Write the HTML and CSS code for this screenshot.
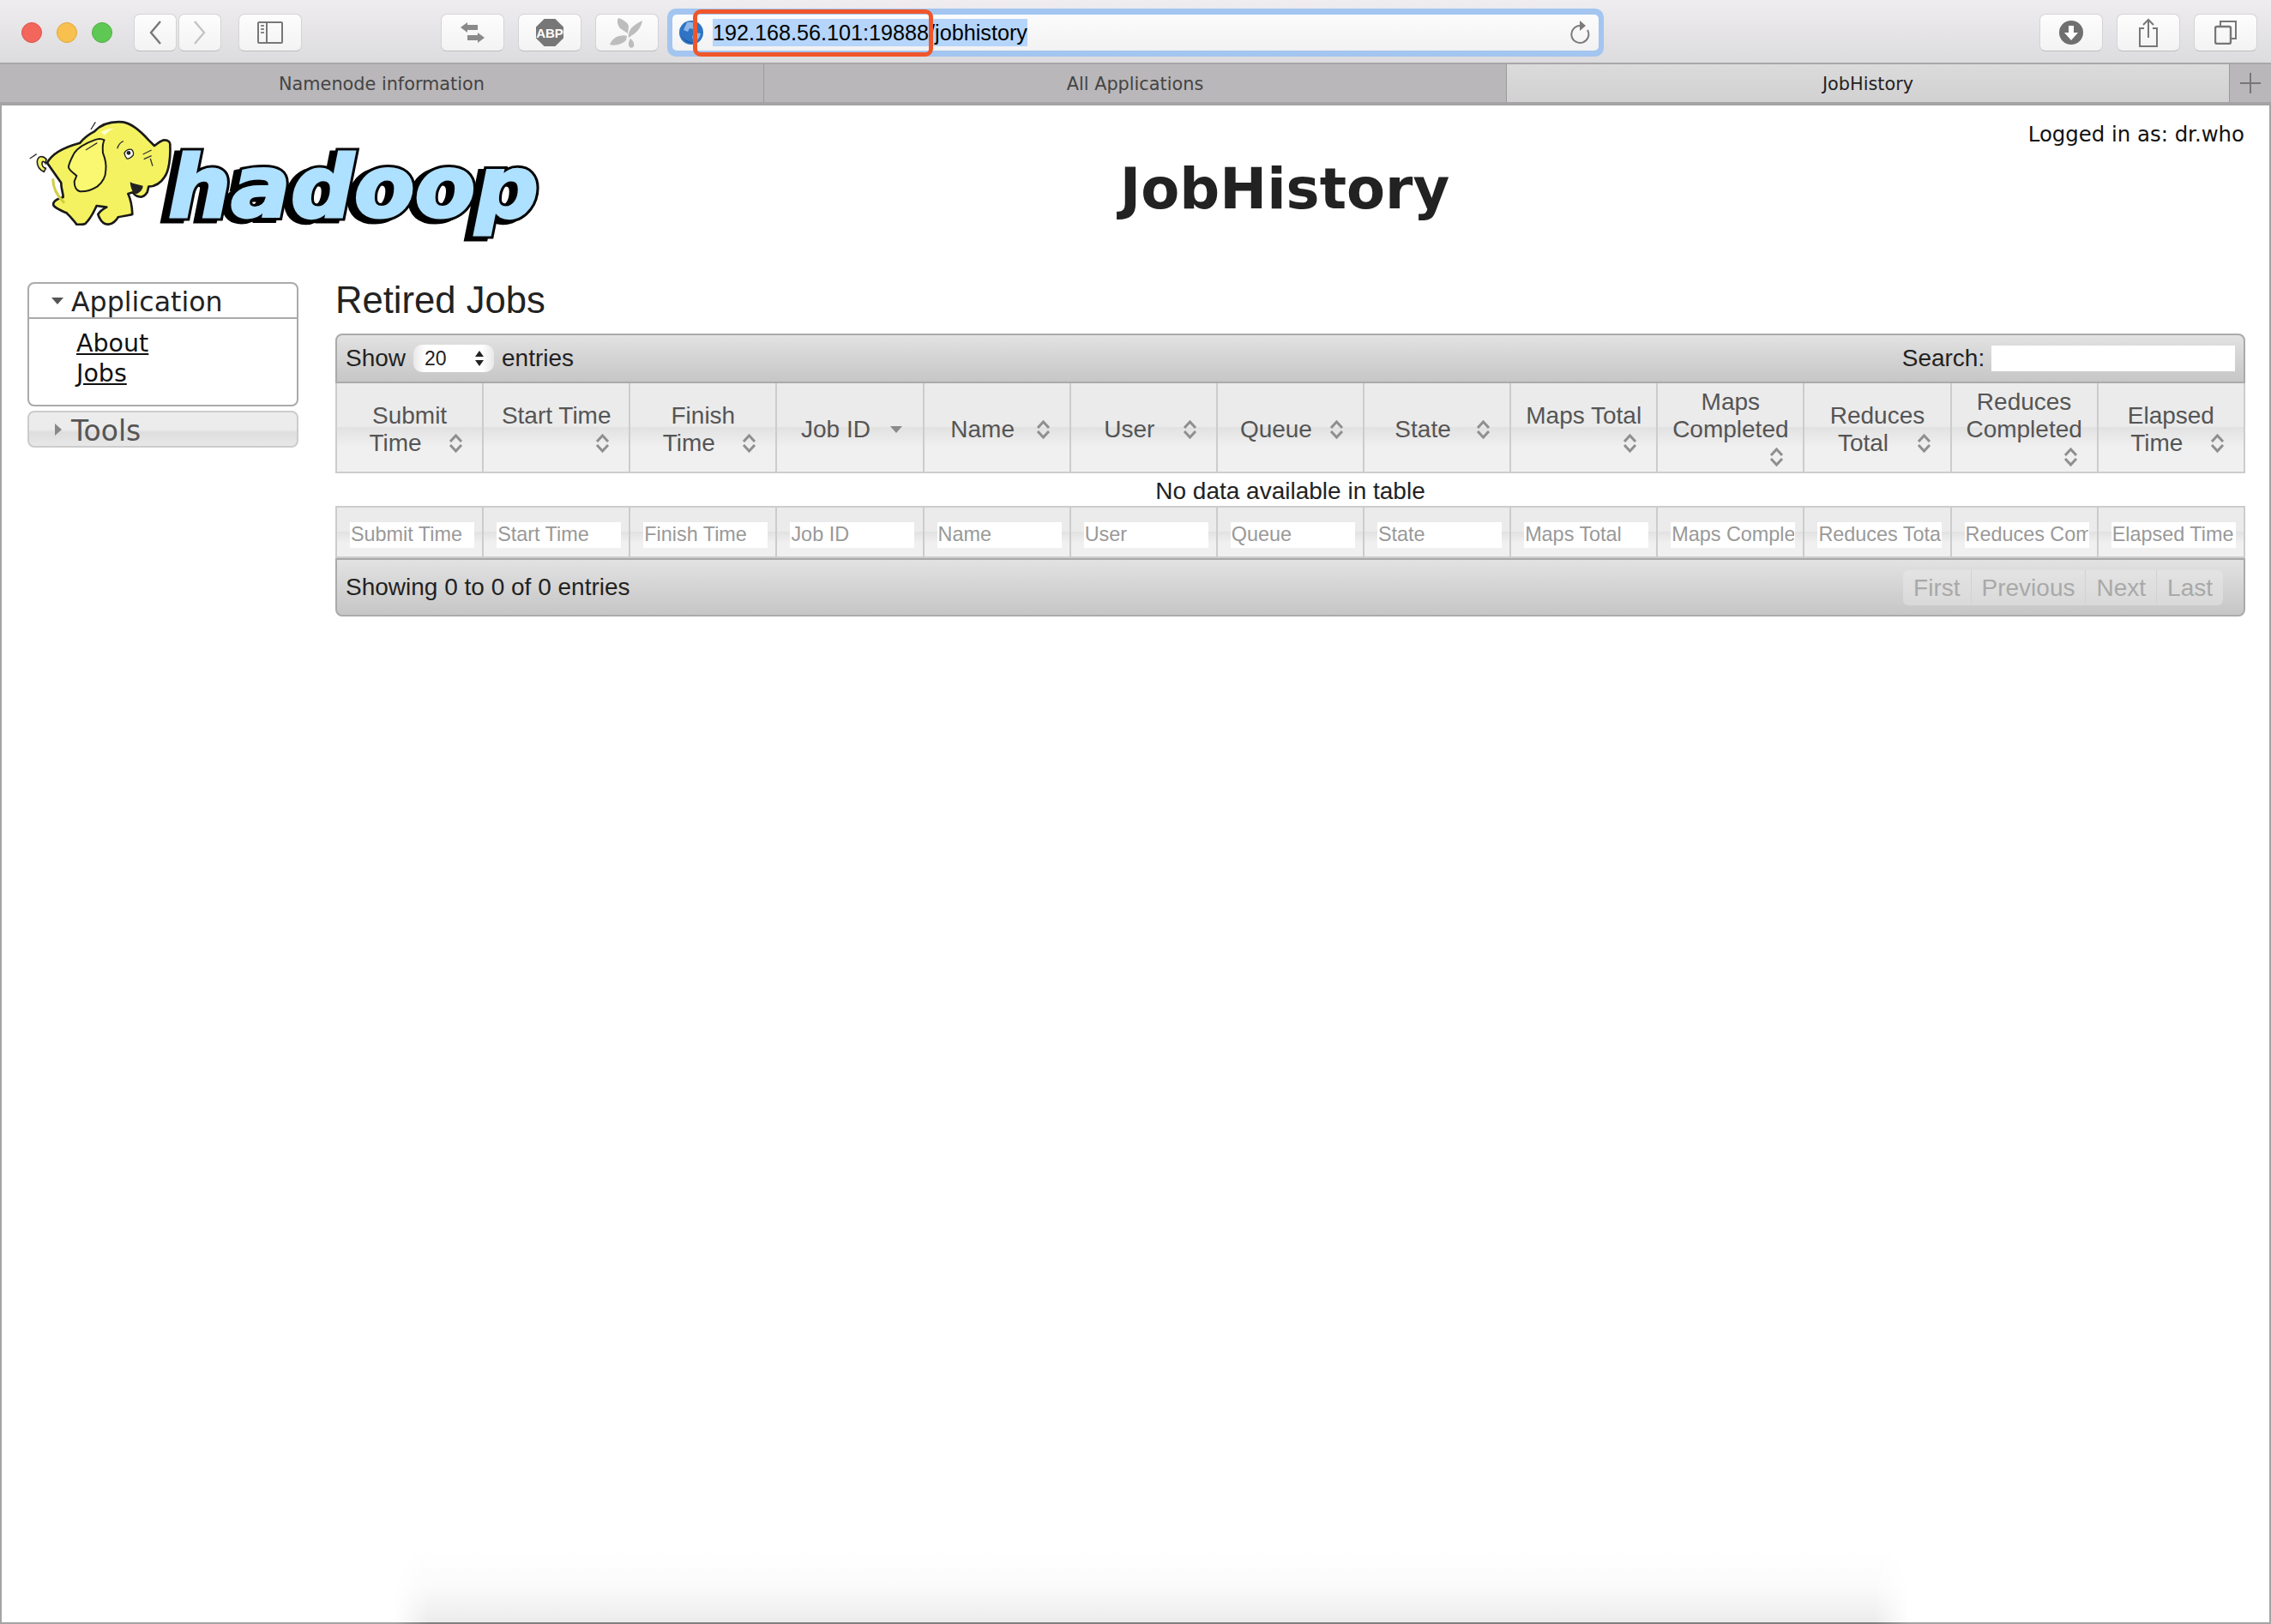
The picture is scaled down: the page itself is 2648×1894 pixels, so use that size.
FILE: index.html
```html
<!DOCTYPE html>
<html lang="en">
  <head>
    <meta charset="UTF-8" />
    <title>JobHistory</title>
    <link rel="stylesheet" href="styles.css">
  </head>
  <body>
    <header class="toolbar">
      <span class="light red"></span>
      <span class="light yellow"></span>
      <span class="light green"></span>
      <div class="btn nav-back">
        <svg width="16" height="30" viewBox="0 0 16 30"><path d="M14 2 3 15l11 13" fill="none" stroke="#777" stroke-width="2.4"/></svg>
      </div>
      <div class="btn nav-fwd">
        <svg width="16" height="30" viewBox="0 0 16 30"><path d="M2 2l11 13L2 28" fill="none" stroke="#c4c4c4" stroke-width="2.4"/></svg>
      </div>
      <div class="btn wide sidebar-btn">
        <svg width="30" height="26" viewBox="0 0 30 26"><rect x="1" y="1" width="28" height="24" rx="1" fill="none" stroke="#777" stroke-width="2"/><path d="M11 1v24" stroke="#777" stroke-width="2"/><path d="M4 5h4M4 9h4M4 13h4" stroke="#888" stroke-width="2"/></svg>
      </div>
      <div class="btn wide ext-first">
        <svg width="28" height="24" viewBox="0 0 28 24"><path d="M0 6l8-6v3h12v6H8v3zM28 18l-8 6v-3H8v-6h12v-3z" fill="#8a8a8a"/></svg>
      </div>
      <div class="btn wide ext">
        <span class="abp">ABP</span>
      </div>
      <div class="btn wide ext">
        <svg width="40" height="36" viewBox="0 0 40 36"><path d="M10 1c6 2 12 6 12 10l-1 8-9-6c-3-4-4-8-2-12zM38 4c-1 7-6 14-12 17l-4 3c-1-4 1-10 5-13 3-3 7-5 11-7zM0 32c2-5 6-9 11-10 4-1 7-1 9 0l-1 5c-4 4-12 7-19 5zM24 25c3 2 5 5 4 9-1 2-4 2-5 1-2-3-1-7 1-10z" fill="#bdbdbd"/></svg>
      </div>
      <div class="url-ring">
        <div class="url-field">
          <svg class="globe" width="28" height="28" viewBox="0 0 28 28"><circle cx="14" cy="14" r="14" fill="#2f74c4"/><path d="M9 2c5-1 10 0 12 4l-4 4-5-1-2 4-5-2zM18 14l7 1c-1 5-4 9-8 10l-2-6z" fill="#8db8e6"/><path d="M2 17c3 6 9 10 15 9C10 25 5 22 2 17z" fill="#15407e"/></svg>
          <span class="url-box"><span class="url-text">192.168.56.101:19888/jobhistory</span></span>
          <svg class="reload" width="24" height="30" viewBox="0 0 24 30"><path d="M12 7A10 10 0 1 0 21 12" fill="none" stroke="#7b7b7b" stroke-width="2"/><path d="M12 1l7 6-7 6z" fill="#7b7b7b"/></svg>
        </div>
      </div>
      <div class="btn tool download">
        <svg width="28" height="28" viewBox="0 0 28 28"><circle cx="14" cy="14" r="14" fill="#6f6f6f"/><path d="M11 6h6v8h5l-8 9-8-9h5z" fill="#fff"/></svg>
      </div>
      <div class="btn tool">
        <svg width="24" height="34" viewBox="0 0 24 34"><path d="M7 12H2v21h20V12h-5" fill="none" stroke="#777" stroke-width="2"/><path d="M12 23V2M6 8l6-6 6 6" fill="none" stroke="#777" stroke-width="2"/></svg>
      </div>
      <div class="btn tool">
        <svg width="26" height="28" viewBox="0 0 26 28"><rect x="1" y="7" width="18" height="20" rx="2" fill="none" stroke="#777" stroke-width="2.4"/><path d="M7 6V1h18v20h-5" fill="none" stroke="#777" stroke-width="2"/></svg>
      </div>
    </header>
    <div class="url-mark"></div>

    <nav class="tabs">
      <div class="tab first">Namenode information</div>
      <div class="tab second">All Applications</div>
      <div class="tab active">JobHistory</div>
      <div class="tab-add">
        <svg width="26" height="26" viewBox="0 0 26 26"><path d="M13 1v24M1 13h24" stroke="#777" stroke-width="2"/></svg>
      </div>
    </nav>

    <main class="page">
      <div class="banner">
        <svg class="logo" width="600" height="145" viewBox="34 140 600 145">
          <defs>
            <text id="word" x="196" y="253" textLength="432" lengthAdjust="spacingAndGlyphs">hadoop</text>
          </defs>
          <use href="#word" class="word-back" x="-7" y="3"/>
          <use href="#word" class="word-back"/>
          <use href="#word" class="word-front"/>
          <g transform="translate(30 135) scale(0.3333)">
            <path d="M72 152C58 136 42 142 40 160c-1 16 10 32 24 36l6-12c-8-2-14-10-13-20 2-6 8-4 12 2z" fill="#f4f260" stroke="#222" stroke-width="5"/>
            <path d="M75 165c12-24 40-50 115-70 14-18 34-32 50-40 24-26 62-36 100-33 30 4 62 32 90 63l20 20c12-8 24-20 35-20 14 0 22 8 20 20 2 42-4 90-20 110-14 22-36 32-55 33l-5 20c-8 12-18 18-28 15-12-2-18-8-22-15l-17 5c10 20 14 48 15 72-14 4-34 6-50 10-6 12-22 26-35 25-12 0-26-8-35-35 6-10 16-18 30-25l-35-5c-8 18-22 46-40 63-10 4-24 2-30 2-8-12-24-28-35-40-14-6-32-12-45-25-4-8-2-20 33-30 0-16-8-32-7-50z" fill="#f4f260" stroke="#1a1a1a" stroke-width="8" stroke-linejoin="round"/>
            <path d="M240 85c14-6 28-4 35 0-8 14-6 30-5 45 8 20 12 44 10 60 0 22-12 44-30 58-16 10-36 18-60 17-14-4-20-16-20-35l8-20c-10-10-28-20-28-30 0-14 12-34 20-50 14-20 40-34 70-45z" fill="#f9f870" stroke="#1a1a1a" stroke-width="6" stroke-linejoin="round"/>
            <path d="M365 232c12 6 30 10 45 13 0 12-10 24-22 28-10 2-20-12-23-41z" fill="#222"/>
            <path d="M345 130c6-10 16-14 25-12 6 4 8 14 6 20-8 8-16 14-22 12-4-4-8-12-9-20z" fill="#fff" stroke="#222" stroke-width="4"/>
            <circle cx="360" cy="130" r="7" fill="#222"/>
            <path d="M320 115c4-12 10-22 22-26M410 135l30-15M413 152l27-12M436 150l8 26M228 48l16-26M14 150l24-16M210 120l40-25" fill="none" stroke="#333" stroke-width="4"/>
            <path d="M262 58c14-10 30-14 46-14-16 8-24 16-32 24z" fill="#fffec8"/>
            <path d="M95 220c0 30 14 60 40 85" fill="none" stroke="#d0ce40" stroke-width="9"/>
          </g>
        </svg>
        <h1 class="title">JobHistory</h1>
        <div class="user">Logged in as: dr.who</div>
      </div>

      <div class="columns">
        <aside class="side">
          <div class="acc open">
            <div class="acc-head">
              <svg class="acc-arrow" width="14" height="8" viewBox="0 0 14 8"><path d="M0 0h14L7 8z" fill="#555"/></svg>
              Application
            </div>
            <div class="acc-body">
              <a href="#">About</a>
              <a href="#">Jobs</a>
            </div>
          </div>
          <div class="acc closed">
            <div class="acc-head">
              <svg class="acc-arrow" width="8" height="14" viewBox="0 0 8 14"><path d="M0 0l8 7-8 7z" fill="#888"/></svg>
              Tools
            </div>
          </div>
        </aside>

        <section class="content">
          <h2 class="heading">Retired Jobs</h2>
          <div class="bar top">
            <div class="length">
              Show
              <span class="select">20
                <svg width="10" height="18" viewBox="0 0 10 18"><path d="M5 0l5 7H0zM5 18l5-7H0z" fill="#222"/></svg>
              </span>
              entries
            </div>
            <label class="search">Search: <input type="text"></label>
          </div>
          <table class="jobs">
            <thead>
              <tr>
                <th>Submit Time<svg class="sort"><use href="#both"/></svg></th>
                <th>Start Time<svg class="sort"><use href="#both"/></svg></th>
                <th>Finish Time<svg class="sort"><use href="#both"/></svg></th>
                <th>Job ID<svg class="sort"><use href="#desc"/></svg></th>
                <th>Name<svg class="sort"><use href="#both"/></svg></th>
                <th>User<svg class="sort"><use href="#both"/></svg></th>
                <th>Queue<svg class="sort"><use href="#both"/></svg></th>
                <th>State<svg class="sort"><use href="#both"/></svg></th>
                <th>Maps Total<svg class="sort"><use href="#both"/></svg></th>
                <th>Maps Completed<svg class="sort"><use href="#both"/></svg></th>
                <th>Reduces Total<svg class="sort"><use href="#both"/></svg></th>
                <th>Reduces Completed<svg class="sort"><use href="#both"/></svg></th>
                <th>Elapsed Time<svg class="sort"><use href="#both"/></svg></th>
              </tr>
            </thead>
            <tbody>
              <tr><td colspan="13" class="empty">No data available in table</td></tr>
            </tbody>
            <tfoot>
              <tr>
                <th><input placeholder="Submit Time"></th>
                <th><input placeholder="Start Time"></th>
                <th><input placeholder="Finish Time"></th>
                <th><input placeholder="Job ID"></th>
                <th><input placeholder="Name"></th>
                <th><input placeholder="User"></th>
                <th><input placeholder="Queue"></th>
                <th><input placeholder="State"></th>
                <th><input placeholder="Maps Total"></th>
                <th><input placeholder="Maps Completed"></th>
                <th><input placeholder="Reduces Total"></th>
                <th><input placeholder="Reduces Completed"></th>
                <th><input placeholder="Elapsed Time"></th>
              </tr>
            </tfoot>
          </table>
          <div class="bar bottom">
            <div>Showing 0 to 0 of 0 entries</div>
            <div class="pager">
              <span>First</span><span>Previous</span><span>Next</span><span>Last</span>
            </div>
          </div>
        </section>
      </div>
      <div class="window-shadow"></div>
    </main>

    <svg class="defs" width="0" height="0">
      <symbol id="both" viewBox="0 0 33 32" overflow="visible">
        <path d="M11 14l6.5-7 6.5 7M11 18l6.5 7 6.5-7" fill="none" stroke="#8f8f8f" stroke-width="3"/>
      </symbol>
      <symbol id="desc" viewBox="0 0 33 32" overflow="visible">
        <path d="M10 12h14l-7 8z" fill="#8a8a8a"/>
      </symbol>
    </svg>
  </body>
</html>
```

FILE: styles.css
```css
* {
  box-sizing: border-box;
}
html,
body {
  margin: 0;
  height: 1894px;
  overflow: hidden;
}
body {
  position: relative;
  background: #fff;
  color: #222;
  font-family: "Liberation Sans", sans-serif;
}

/* browser chrome */
.toolbar {
  display: flex;
  align-items: center;
  height: 75px;
  padding: 3px 16px 0 25px;
  background: linear-gradient(#efedef, #dcdbdd);
  border-bottom: 2px solid #a8a6a8;
}
.light {
  width: 24px;
  height: 24px;
  border-radius: 50%;
  margin-right: 17px;
}
.light.red {
  background: #f2665c;
  border: 1px solid #e0524a;
}
.light.yellow {
  background: #f8c04e;
  border: 1px solid #e0a73c;
}
.light.green {
  background: #5fc855;
  border: 1px solid #50b046;
}
.btn {
  display: flex;
  align-items: center;
  justify-content: center;
  flex: none;
  width: 50px;
  height: 44px;
  border-radius: 7px;
  background: linear-gradient(#fdfdfd, #f3f3f3);
  border: 1px solid #d4d3d5;
  border-bottom-color: #bdbcbe;
}
.nav-back {
  margin-left: 8px;
}
.nav-fwd {
  margin-left: 2px;
}
.btn.wide {
  width: 74px;
}
.sidebar-btn {
  margin-left: 20px;
}
.ext-first {
  margin-left: 162px;
}
.ext {
  margin-left: 16px;
}
.abp {
  width: 32px;
  height: 32px;
  display: flex;
  align-items: center;
  justify-content: center;
  background: #777;
  color: #fff;
  font-size: 15px;
  font-weight: bold;
  clip-path: polygon(30% 0, 70% 0, 100% 30%, 100% 70%, 70% 100%, 30% 100%, 0 70%, 0 30%);
}
.url-ring {
  flex: none;
  width: 1092px;
  height: 56px;
  margin: 0 508px 0 10px;
  padding: 7px 6px;
  border-radius: 10px;
  background: #a3c5f0;
}
.url-field {
  display: flex;
  align-items: center;
  height: 42px;
  padding: 0 10px 0 8px;
  border-radius: 5px;
  background: linear-gradient(#fcfcfc, #f2f2f2);
}
.globe {
  flex: none;
}
.url-box {
  flex: 1;
  margin-left: 11px;
}
.url-text {
  display: inline-block;
  line-height: 32px;
  font-size: 25.2px;
  color: #000;
  background: #b5d5fb;
}
.reload {
  flex: none;
}
.btn.tool {
  width: 74px;
  margin-right: 16px;
}
.btn.tool:last-child {
  margin-right: 0;
}
.url-mark {
  position: absolute;
  left: 808px;
  top: 11px;
  width: 280px;
  height: 55px;
  border: 5px solid #f0562a;
  border-radius: 9px;
}
.tabs {
  display: flex;
  height: 48px;
  background: #b9b7b9;
  border-bottom: 4px solid #a5a3a5;
  font-family: "DejaVu Sans", sans-serif;
  font-size: 20.8px;
  color: #444;
}
.tab {
  display: flex;
  align-items: center;
  justify-content: center;
  padding-top: 2px;
  border-right: 1px solid #9c9a9c;
}
.tab.first {
  width: 891px;
}
.tab.second {
  width: 866px;
}
.tab.active {
  width: 843px;
  color: #222;
  background: linear-gradient(#dcdbdc, #d2d1d2);
}
.tab-add {
  flex: 1;
  display: flex;
  align-items: center;
  justify-content: center;
}

/* page */
.page {
  position: relative;
  height: 1771px;
  border-left: 2px solid #a5a3a5;
  border-right: 2px solid #a5a3a5;
  border-bottom: 2px solid #a5a3a5;
}
.window-shadow {
  position: absolute;
  left: 458px;
  right: 420px;
  bottom: -2px;
  height: 87px;
  border-bottom: 2px solid #808080;
  background: linear-gradient(#fff, #fbfbfb 50%, #ececec);
  -webkit-mask-image: linear-gradient(90deg, transparent, #000 40px, #000 calc(100% - 40px), transparent);
  mask-image: linear-gradient(90deg, transparent, #000 40px, #000 calc(100% - 40px), transparent);
}
.banner {
  display: grid;
  grid-template-columns: 380px 1fr 32px;
  height: 204px;
}
.logo {
  grid-column: 1;
  grid-row: 1;
  margin: 17px 0 0 32px;
}
#word {
  font-family: "DejaVu Sans", sans-serif;
  font-weight: bold;
  font-style: italic;
  font-size: 100px;
}
.word-back {
  fill: #000;
  stroke: #000;
  stroke-width: 9px;
  stroke-linejoin: miter;
}
.word-front {
  fill: #aee0ff;
  stroke: #aee0ff;
  stroke-width: 3px;
}
.title {
  grid-column: 2;
  grid-row: 1;
  margin: 57px 0 0;
  text-align: center;
  font-family: "DejaVu Sans", sans-serif;
  font-size: 65.6px;
  font-weight: bold;
  line-height: 80px;
}
.user {
  grid-column: 2 / 4;
  grid-row: 1;
  justify-self: end;
  margin: 18px 29px 0 0;
  font-family: "DejaVu Sans", sans-serif;
  font-size: 24.4px;
  line-height: 32px;
  color: #111;
}
.columns {
  display: flex;
}
.side {
  width: 316px;
  margin-left: 30px;
  margin-top: 2px;
  font-family: "DejaVu Sans", sans-serif;
}
.acc {
  border: 2px solid #aaa;
  border-radius: 8px;
  font-size: 31.6px;
}
.acc-head {
  display: flex;
  align-items: center;
  height: 41px;
  padding: 2px 0 0 49px;
  position: relative;
  color: #222;
}
.acc-arrow {
  position: absolute;
  left: 26px;
  top: 16px;
}
.open .acc-head {
  border-bottom: 2px solid #aaa;
}
.acc-body {
  height: 100px;
  padding: 11px 0 0 55px;
  font-size: 28.5px;
  line-height: 35px;
}
.acc-body a {
  display: block;
  color: #111;
}
.closed {
  height: 43px;
  margin-top: 5px;
  border-color: #ccc;
  background: linear-gradient(#ececec 50%, #dedede 60%, #e8e8e8);
  font-size: 33px;
}
.closed .acc-head {
  color: #555;
}
.closed .acc-arrow {
  left: 30px;
  top: 13px;
}
.content {
  width: 2227px;
  margin-left: 43px;
}
.heading {
  margin: 0;
  height: 62px;
  font-size: 43.6px;
  font-weight: normal;
  line-height: 46px;
  color: #222;
}
.bar {
  display: flex;
  align-items: center;
  justify-content: space-between;
  font-size: 28px;
  color: #222;
  border: 2px solid #aaa;
  background: linear-gradient(#e2e2e2, #c6c6c6);
}
.bar.top {
  height: 58px;
  padding: 0 10px;
  border-radius: 8px 8px 0 0;
}
.bar.bottom {
  height: 68px;
  padding: 0 24px 0 10px;
  border-radius: 0 0 8px 8px;
}
.length {
  display: flex;
  align-items: center;
}
.select {
  display: flex;
  align-items: center;
  justify-content: space-between;
  width: 94px;
  height: 32px;
  margin: 0 9px;
  padding: 0 12px 0 13px;
  border-radius: 10px;
  background: linear-gradient(90deg, #e8e8e8, #fff 15%, #fff 85%, #e8e8e8);
  font-size: 23px;
}
.search {
  display: flex;
  align-items: center;
  white-space: pre;
}
.search input {
  width: 284px;
  height: 30px;
  border: 0;
  background: #fff;
}
.jobs {
  width: 100%;
  table-layout: fixed;
  border-collapse: collapse;
}
.jobs thead th {
  height: 104px;
  padding: 5px 15px 0;
  font-size: 28px;
  font-weight: normal;
  line-height: 32px;
  color: #555;
  text-align: center;
  vertical-align: middle;
  background: linear-gradient(#ebebeb 49%, #e2e2e2 50%, #f0f0f0 72%);
  border-right: 2px solid #ccc;
  border-bottom: 2px solid #ccc;
}
.jobs th:first-child {
  border-left: 2px solid #ccc;
}
.sort {
  float: right;
  width: 33px;
  height: 32px;
  overflow: visible;
}
.empty {
  height: 40px;
  padding: 3px 0 0;
  font-size: 28px;
  line-height: 32px;
  text-align: center;
}
.jobs tfoot th {
  height: 59px;
  padding: 6px 0 0 15px;
  text-align: left;
  background: linear-gradient(#ebebeb 49%, #e2e2e2 50%, #f0f0f0 72%);
  border-right: 2px solid #ccc;
  border-top: 2px solid #ccc;
  border-bottom: 2px solid #ccc;
}
.jobs input {
  display: block;
  width: 145px;
  height: 30px;
  padding: 0 1px;
  border: 0;
  background: #fff;
  font-family: "Liberation Sans", sans-serif;
  font-size: 23.4px;
}
.jobs input::placeholder {
  color: #999;
  opacity: 1;
}
.pager {
  display: flex;
  height: 41px;
  border-radius: 6px;
  background: rgba(235, 235, 235, 0.45);
  color: #a9a9a9;
  line-height: 41px;
}
.pager span {
  padding: 0 12px;
  border-right: 1px solid #d2d2d2;
}
.pager span:last-child {
  border-right: 0;
}
.defs {
  position: absolute;
}
```
